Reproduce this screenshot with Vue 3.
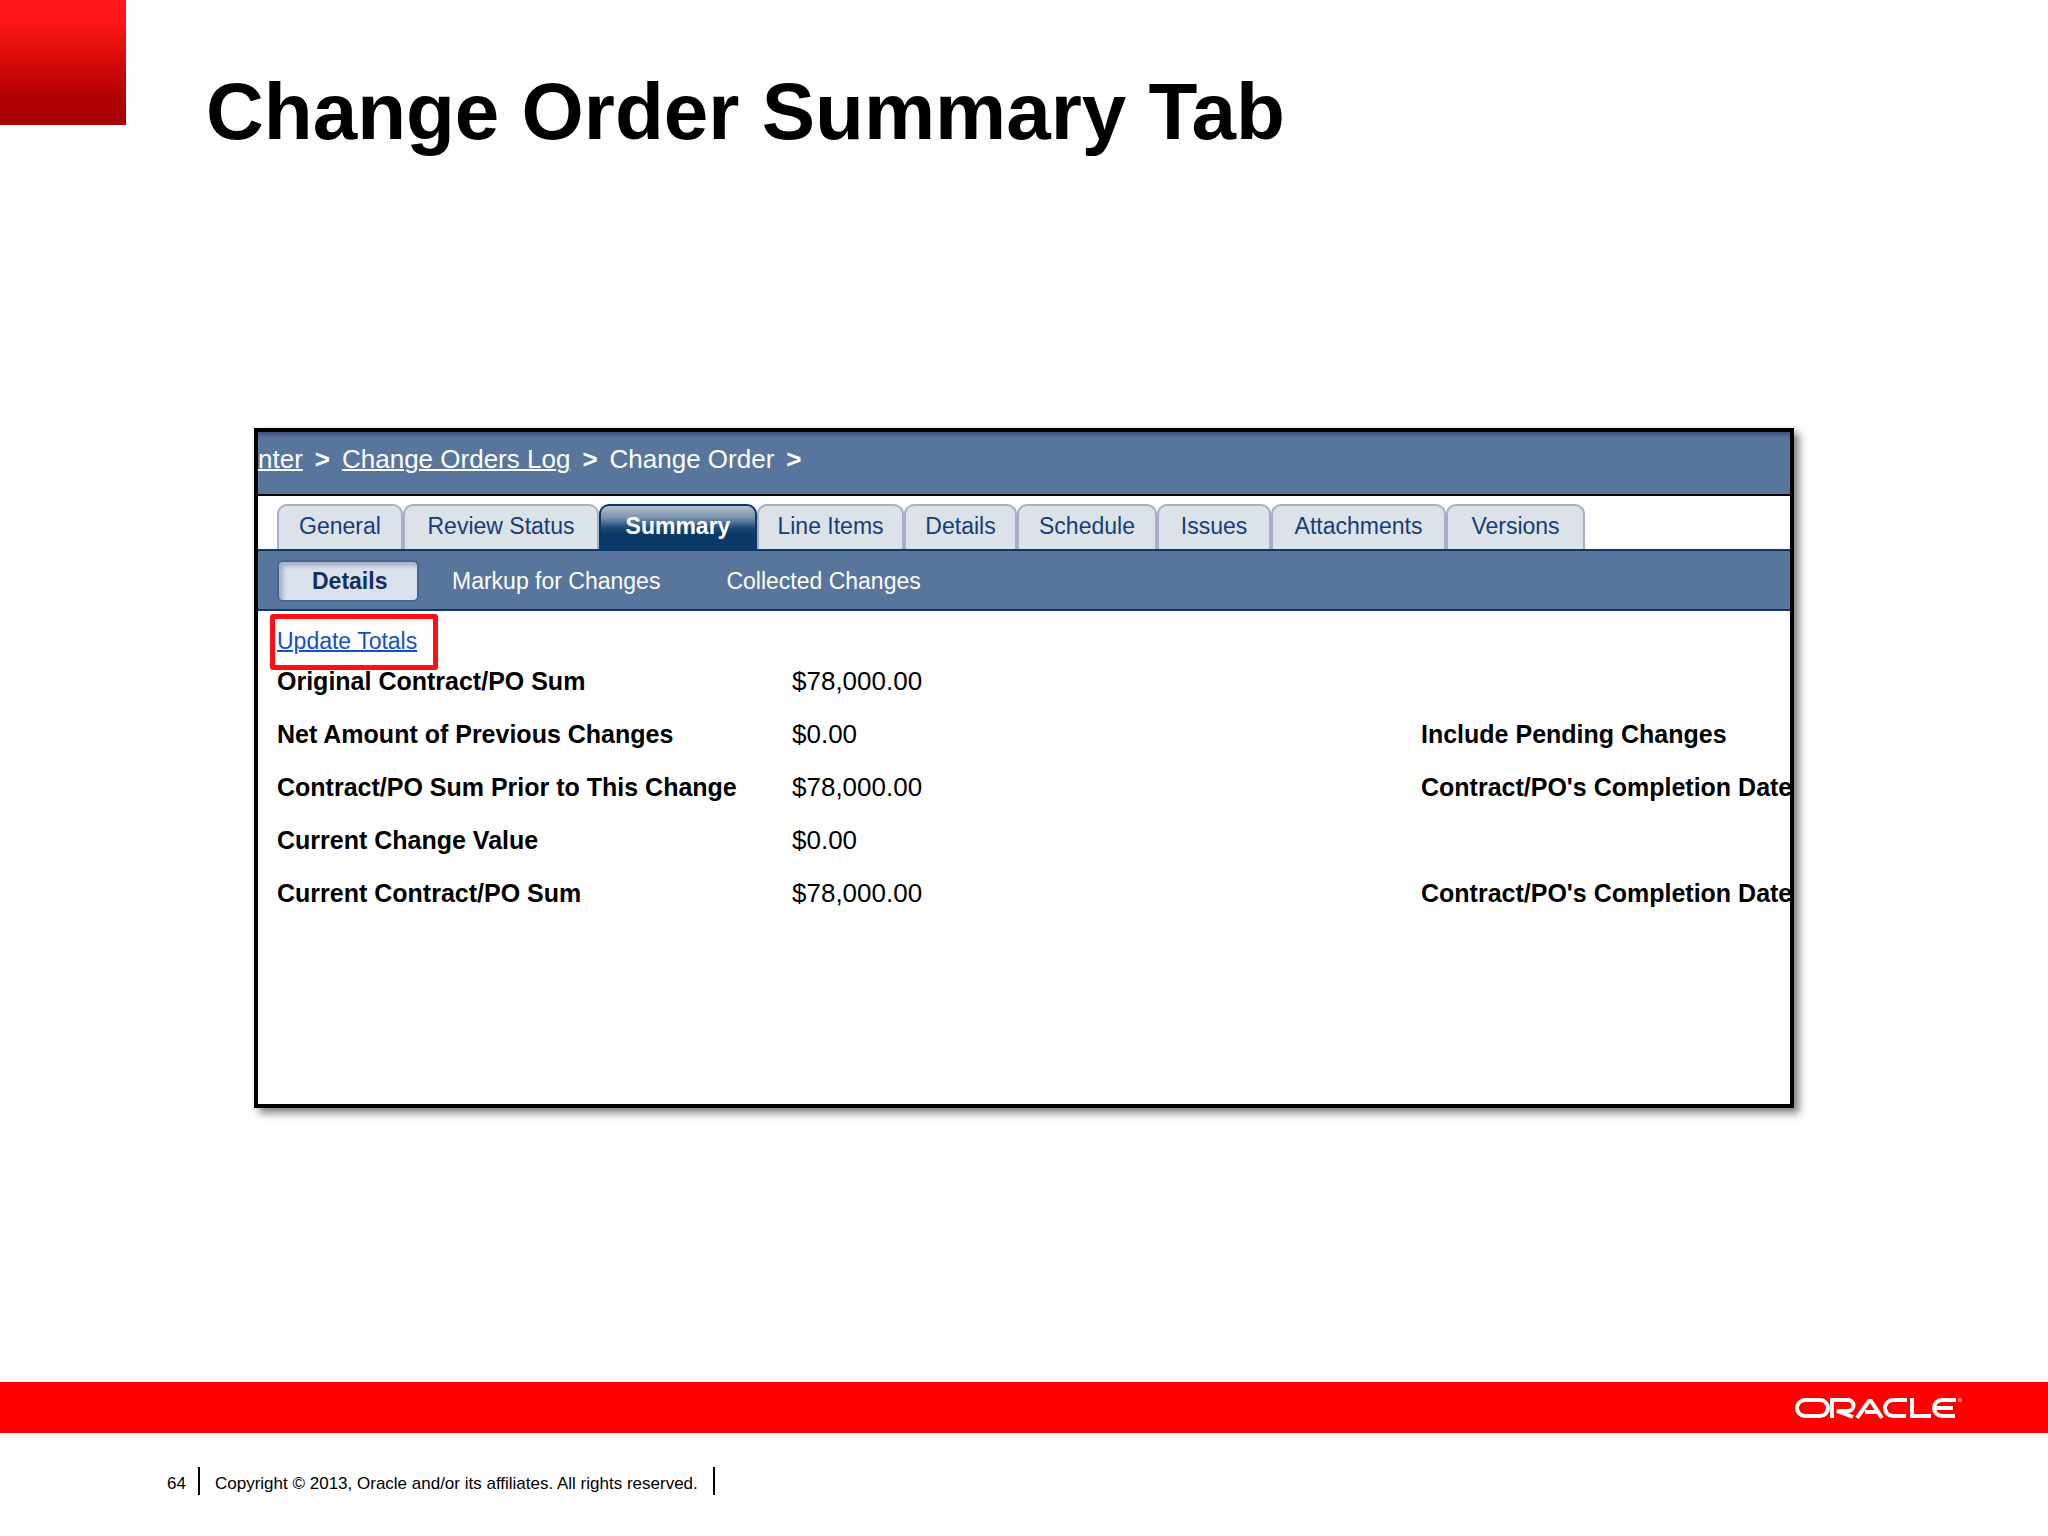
<script setup>
const tabs = ['General', 'Review Status', 'Summary', 'Line Items', 'Details', 'Schedule', 'Issues', 'Attachments', 'Versions']
const activeTab = 'Summary'

const subTabs = ['Details', 'Markup for Changes', 'Collected Changes']
const activeSubTab = 'Details'

const rows = [
  { label: 'Original Contract/PO Sum', value: '$78,000.00', extra: '' },
  { label: 'Net Amount of Previous Changes', value: '$0.00', extra: 'Include Pending Changes' },
  { label: 'Contract/PO Sum Prior to This Change', value: '$78,000.00', extra: "Contract/PO's Completion Date" },
  { label: 'Current Change Value', value: '$0.00', extra: '' },
  { label: 'Current Contract/PO Sum', value: '$78,000.00', extra: "Contract/PO's Completion Date" }
]
</script>

<template>
  <div class="slide">
    <header class="head">
      <div class="corner"></div>
      <h1 class="title">Change Order Summary Tab</h1>
    </header>

    <main class="body">
      <section class="panel">
        <nav class="crumbs" aria-label="Breadcrumb">
          <a href="#">nter</a>
          <b>&gt;</b>
          <a href="#">Change Orders Log</a>
          <b>&gt;</b>
          <span>Change Order</span>
          <b>&gt;</b>
        </nav>

        <div class="tabs">
          <button v-for="tab in tabs" :key="tab" type="button" class="tab" :class="{ active: tab === activeTab }">{{ tab }}</button>
        </div>

        <div class="subtabs">
          <button v-for="tab in subTabs" :key="tab" type="button" class="subtab" :class="{ active: tab === activeSubTab }">{{ tab }}</button>
        </div>

        <div class="content">
          <div class="update">
            <a href="#">Update Totals</a>
            <span class="highlight"></span>
          </div>
          <table class="totals">
            <tbody>
              <tr v-for="row in rows" :key="row.label">
                <th scope="row" class="label">{{ row.label }}</th>
                <td class="value">{{ row.value }}</td>
                <th class="extra">{{ row.extra }}</th>
              </tr>
            </tbody>
          </table>
        </div>
      </section>
    </main>

    <div class="band">
      <svg class="logo" viewBox="0 0 168 22" width="168" height="22" role="img" aria-label="Oracle">
        <g fill="none" stroke="#fff" stroke-width="4">
          <path d="M10 3H25A8 8 0 0 1 25 19H10A8 8 0 0 1 10 3Z" />
          <path d="M37 21V3H53A5 5 0 0 1 53 14H42L58 20" />
          <path d="M62 21L74 4H76L87 21M70 15H82" />
          <path d="M112 3H98A8 8 0 0 0 98 19H111" />
          <path d="M117 1V19H136" />
          <path d="M161 3H147A8 8 0 0 0 147 19H160M140 11H158" />
        </g>
        <circle cx="165" cy="3" r="1.5" fill="none" stroke="#fff" stroke-width=".7" />
      </svg>
    </div>

    <footer class="foot">
      <span class="page">64</span>
      <span class="copy">Copyright © 2013, Oracle and/or its affiliates. All rights reserved.</span>
    </footer>
  </div>
</template>

<style>
body {
  background: #fefefe;
}
</style>

<style scoped>
.slide {
  display: flex;
  flex-direction: column;
  min-height: 100vh;
  font-family: "Liberation Sans", Arial, sans-serif;
  color: #000;
}

.slide * {
  box-sizing: border-box;
}

.head {
  display: flex;
  gap: 80px;
}

.corner {
  width: 126px;
  height: 125px;
  background: linear-gradient(#ff1a1a 0%, #ff1616 16%, #b00000 80%, #a80000 100%);
}

.title {
  margin: 0;
  padding-top: 64px;
  font-size: 80px;
  line-height: 96px;
  font-weight: bold;
}

.body {
  flex: 1;
  padding: 268px 254px 0;
}

.panel {
  min-height: 680px;
  overflow: hidden;
  border: 4px solid #000;
  background: #fefefe;
  box-shadow: 5px 5px 8px rgba(0, 0, 0, .5);
}

.crumbs {
  display: flex;
  gap: 12px;
  height: 64px;
  padding-top: 12px;
  border-bottom: 2px solid #000;
  background: linear-gradient(#3d4f78 0, #58759b 6px);
  color: #fff;
  font-size: 26px;
  line-height: 30px;
  white-space: nowrap;
}

.crumbs a {
  color: inherit;
  text-decoration-thickness: 2px;
}

.tabs {
  display: grid;
  grid-template-columns: 126px 196px 158px 147px 113px 140px 114px 175px 139px;
  padding: 8px 0 0 19px;
  border-bottom: 2px solid #0b3a68;
}

.tab {
  height: 45px;
  padding: 0 0 4px;
  border: 2px solid #a5afc5;
  border-bottom: 0;
  border-radius: 10px 10px 0 0;
  background: #dbe3e9;
  color: #173c78;
  font: 23px/28px "Liberation Sans", Arial, sans-serif;
}

.tab.active {
  border-color: #0b3a68;
  background: linear-gradient(#b4c2d1 0, #7990ad 12px, #1b4778 22px, #0b3a68 28px);
  color: #fff;
  font-weight: bold;
}

.subtabs {
  display: flex;
  align-items: center;
  height: 60px;
  padding: 2px 19px 0;
  border-bottom: 2px solid #0b3a68;
  background: #58759b;
}

.subtab {
  height: 42px;
  padding: 0 33px;
  border: 0;
  background: none;
  color: #fff;
  font: 23px/28px "Liberation Sans", Arial, sans-serif;
}

.subtab.active {
  width: 142px;
  border: 2px solid #46658f;
  border-radius: 6px;
  background: #dbe1ec;
  box-shadow: inset 4px 4px 4px #a3b1c6;
  color: #12305f;
  font-weight: bold;
}

.content {
  padding-left: 19px;
}

.update {
  position: relative;
  height: 43px;
  padding-top: 16px;
  font-size: 23px;
  line-height: 28px;
}

.update a {
  color: #1450c8;
  text-decoration-thickness: 2px;
}

.highlight {
  position: absolute;
  top: 3px;
  left: -7px;
  width: 168px;
  height: 56px;
  border: 5px solid #ff0f14;
  border-radius: 3px;
}

.totals {
  width: 100%;
  table-layout: fixed;
  border-collapse: collapse;
}

.totals th,
.totals td {
  height: 53px;
  padding: 0;
  font-size: 25px;
  line-height: 30px;
  text-align: left;
  white-space: nowrap;
}

.totals td {
  font-size: 26px;
}

.label {
  width: 515px;
}

.value {
  width: 629px;
}

.band {
  display: flex;
  align-items: center;
  justify-content: flex-end;
  height: 51px;
  padding-right: 85px;
  background: #ff0000;
}

.foot {
  display: flex;
  height: 103px;
  padding: 34px 0 0 167px;
  font-size: 17px;
  line-height: 25px;
}

.page {
  width: 33px;
  height: 28px;
  padding-top: 4px;
  border-right: 2px solid #000;
}

.copy {
  height: 28px;
  padding: 4px 15px 0;
  border-right: 2px solid #000;
}
</style>
